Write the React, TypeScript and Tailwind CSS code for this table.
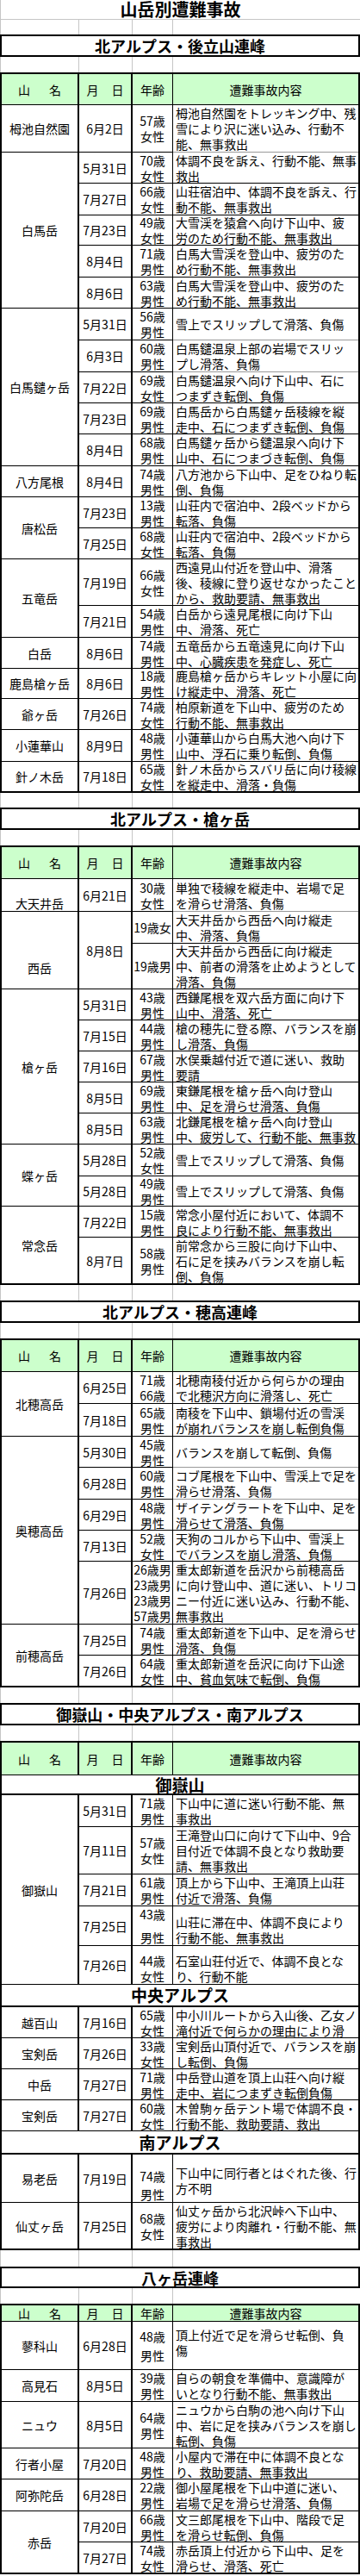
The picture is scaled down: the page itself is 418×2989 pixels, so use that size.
import React from "react";

type Item = { a: string[]; t: string[]; h: string; g?: boolean; ac?: string; tc?: string };
type Row = { d: string; items: Item[] };
type Group = { n: string; rows: Row[]; nc?: string };
type Sub = { sub: string; h: string };
type Part = Group | Sub;
type Section = { title: string; th: string; hh: string; gh: string; parts: Part[] };

const it = (a: string, t: string, h: string, x: Partial<Item> = {}): Item => ({
  a: a.split("/"),
  t: t.split("/"),
  h,
  ...x,
});
const r = (d: string, a: string, t: string, h: string, x: Partial<Item> = {}): Row => ({
  d,
  items: [it(a, t, h, x)],
});
const g = (n: string, rows: Row[], nc?: string): Group => ({ n, rows, nc });

const sections: Section[] = [
  {
    title: "北アルプス・後立山連峰",
    th: "h-[26px]",
    hh: "h-[36px]",
    gh: "h-[17px]",
    parts: [
      g("栂池自然園", [r("6月2日", "57歳/女性", "栂池自然園をトレッキング中、残/雪により沢に迷い込み、行動不/能、無事救出", "h-[55px]", { g: true })]),
      g("白馬岳", [
        r("5月31日", "70歳/女性", "体調不良を訴え、行動不能、無事/救出", "h-[36px]"),
        r("7月27日", "66歳/女性", "山荘宿泊中、体調不良を訴え、行/動不能、無事救出", "h-[37px]"),
        r("7月23日", "49歳/女性", "大雪渓を猿倉へ向け下山中、疲/労のため行動不能、無事救出", "h-[35px]"),
        r("8月4日", "71歳/男性", "白馬大雪渓を登山中、疲労のた/め行動不能、無事救出", "h-[37px]"),
        r("8月6日", "63歳/男性", "白馬大雪渓を登山中、疲労のた/め行動不能、無事救出", "h-[36px]"),
      ]),
      g("白馬鑓ヶ岳", [
        r("5月31日", "56歳/男性", "雪上でスリップして滑落、負傷", "h-[37px]", { g: true }),
        r("6月3日", "60歳/男性", "白馬鑓温泉上部の岩場でスリッ/プし滑落、負傷", "h-[37px]", { g: true }),
        r("7月22日", "69歳/女性", "白馬鑓温泉へ向け下山中、石に/つまずき転倒、負傷", "h-[36px]"),
        r("7月23日", "69歳/男性", "白馬岳から白馬鑓ヶ岳稜線を縦/走中、石につまずき転倒、負傷", "h-[36px]"),
        r("8月4日", "68歳/男性", "白馬鑓ヶ岳から鑓温泉へ向け下/山中、石につまづき転倒、負傷", "h-[37px]"),
      ]),
      g("八方尾根", [r("8月4日", "74歳/男性", "八方池から下山中、足をひねり転/倒、負傷", "h-[36px]")]),
      g("唐松岳", [
        r("7月23日", "13歳/男性", "山荘内で宿泊中、2段ベッドから/転落、負傷", "h-[36px]"),
        r("7月25日", "68歳/女性", "山荘内で宿泊中、2段ベッドから/転落、負傷", "h-[36px]"),
      ]),
      g("五竜岳", [
        r("7月19日", "66歳/女性", "西遠見山付近を登山中、滑落/後、稜線に登り返せなかったこと/から、救助要請、無事救出", "h-[54px]"),
        r("7月21日", "54歳/男性", "白岳から遠見尾根に向け下山/中、滑落、死亡", "h-[37px]"),
      ]),
      g("白岳", [r("8月6日", "74歳/男性", "五竜岳から五竜遠見に向け下山/中、心臓疾患を発症し、死亡", "h-[36px]")]),
      g("鹿島槍ヶ岳", [r("8月6日", "18歳/男性", "鹿島槍ヶ岳からキレット小屋に向/け縦走中、滑落、死亡", "h-[35px]")]),
      g("爺ヶ岳", [r("7月26日", "74歳/女性", "柏原新道を下山中、疲労のため/行動不能、無事救出", "h-[36px]")]),
      g("小蓮華山", [r("8月9日", "48歳/男性", "小蓮華山から白馬大池へ向け下/山中、浮石に乗り転倒、負傷", "h-[37px]")]),
      g("針ノ木岳", [r("7月18日", "65歳/女性", "針ノ木岳からスバリ岳に向け稜線/を縦走中、滑落・負傷", "h-[35px]")]),
    ],
  },
  {
    title: "北アルプス・槍ヶ岳",
    th: "h-[26px]",
    hh: "h-[37px]",
    gh: "h-[17px]",
    parts: [
      g("大天井岳", [r("6月21日", "30歳/女性", "単独で稜線を縦走中、岩場で足/を滑らせ滑落、負傷", "h-[38px]", { g: true })], "items-end"),
      g(
        "西岳",
        [
          {
            d: "8月8日",
            items: [
              it("19歳女", "大天井岳から西岳へ向け縦走/中、滑落、負傷", "h-[37px]"),
              it("19歳男", "大天井岳から西岳に向け縦走/中、前者の滑落を止めようとして/滑落、負傷", "h-[53px]"),
            ],
          },
        ],
        "items-center pt-[40px]"
      ),
      g("槍ヶ岳", [
        r("5月31日", "43歳/男性", "西鎌尾根を双六岳方面に向け下/山中、滑落、死亡", "h-[36px]"),
        r("7月15日", "44歳/男性", "槍の穂先に登る際、バランスを崩/し滑落、負傷", "h-[36px]"),
        r("7月16日", "67歳/男性", "水俣乗越付近で道に迷い、救助/要請", "h-[36px]"),
        r("8月5日", "69歳/男性", "東鎌尾根を槍ヶ岳へ向け登山/中、足を滑らせ滑落、負傷", "h-[36px]"),
        r("8月5日", "63歳/男性", "北鎌尾根を槍ヶ岳へ向け登山/中、疲労して、行動不能、無事救", "h-[36px]"),
      ]),
      g("蝶ヶ岳", [
        r("5月28日", "52歳/女性", "雪上でスリップして滑落、負傷", "h-[37px]"),
        r("5月28日", "49歳/男性", "雪上でスリップして滑落、負傷", "h-[35px]"),
      ]),
      g("常念岳", [
        r("7月22日", "15歳/男性", "常念小屋付近において、体調不/良により行動不能、無事救出", "h-[36px]"),
        r("8月7日", "58歳/男性", "前常念から三股に向け下山中、/石に足を挟みバランスを崩し転/倒、負傷", "h-[54px]"),
      ]),
    ],
  },
  {
    title: "北アルプス・穂高連峰",
    th: "h-[26px]",
    hh: "h-[37px]",
    gh: "h-[18px]",
    parts: [
      g("北穂高岳", [
        r("6月25日", "71歳/66歳", "北穂南稜付近から何らかの理由/で北穂沢方向に滑落し、死亡", "h-[37px]"),
        r("7月18日", "65歳/男性", "南稜を下山中、鎖場付近の雪渓/が崩れバランスを崩し転倒負傷", "h-[38px]"),
      ]),
      g("奥穂高岳", [
        r("5月30日", "45歳/男性", "バランスを崩して転倒、負傷", "h-[36px]", { g: true }),
        r("6月28日", "60歳/男性", "コブ尾根を下山中、雪渓上で足を/滑らせ滑落、負傷", "h-[37px]", { g: true }),
        r("6月29日", "48歳/男性", "ザイテングラートを下山中、足を/滑らせて滑落、負傷", "h-[36px]"),
        r("7月13日", "52歳/女性", "天狗のコルから下山中、雪渓上/でバランスを崩し滑落、負傷", "h-[36px]"),
        r(
          "7月26日",
          "26歳男/23歳男/23歳男/57歳男",
          "重太郎新道を岳沢から前穂高岳/に向け登山中、道に迷い、トリコ/ニー付近に迷い込み、行動不能、/無事救出",
          "h-[73px]"
        ),
      ]),
      g("前穂高岳", [
        r("7月25日", "74歳/男性", "重太郎新道を下山中、足を滑らせ/滑落、負傷", "h-[36px]"),
        r("7月26日", "64歳/女性", "重太郎新道を岳沢に向け下山途/中、貧血気味で転倒、負傷", "h-[36px]"),
      ]),
    ],
  },
  {
    title: "御嶽山・中央アルプス・南アルプス",
    th: "h-[26px]",
    hh: "h-[38px]",
    gh: "h-[18px]",
    parts: [
      { sub: "御嶽山", h: "h-[23px]" },
      g("御嶽山", [
        r("5月31日", "71歳/男性", "下山中に道に迷い行動不能、無/事救出", "h-[37px]"),
        r("7月11日", "57歳/女性", "王滝登山口に向けて下山中、9合/目付近で体調不良となり救助要/請、無事救出", "h-[55px]"),
        r("7月21日", "61歳/男性", "頂上から下山中、王滝頂上山荘/付近で滑落、負傷", "h-[37px]"),
        r("7月25日", "43歳/男性", "山荘に滞在中、体調不良により/行動不能、無事救出", "h-[46px]", {
          ac: "justify-between",
          tc: "justify-end",
        }),
        r("7月26日", "44歳/女性", "石室山荘付近で、体調不良とな/り、行動不能", "h-[45px]", {
          ac: "justify-end",
          tc: "justify-end",
        }),
      ]),
      { sub: "中央アルプス", h: "h-[26px]" },
      g("越百山", [r("7月16日", "65歳/女性", "中小川ルートから入山後、乙女ノ/滝付近で何らかの理由により滑", "h-[36px]")]),
      g("宝剣岳", [r("7月26日", "33歳/女性", "宝剣岳山頂付近で、バランスを崩/し転倒、負傷", "h-[36px]")]),
      g("中岳", [r("7月27日", "71歳/男性", "中岳登山道を頂上山荘へ向け縦/走中、岩につまずき転倒負傷", "h-[36px]")]),
      g("宝剣岳", [r("7月27日", "60歳/女性", "木曽駒ヶ岳テント場で体調不良・/行動不能、救助要請、救出", "h-[36px]")]),
      { sub: "南アルプス", h: "h-[27px]" },
      g("易老岳", [
        r("7月19日", "74歳/男性", "下山中に同行者とはぐれた後、行/方不明", "h-[56px]", {
          ac: "justify-end gap-[3px]",
          tc: "justify-start pt-[12px]",
        }),
      ]),
      g("仙丈ヶ岳", [r("7月25日", "68歳/女性", "仙丈ヶ岳から北沢峠へ下山中、/疲労により肉離れ・行動不能、無/事救出", "h-[54px]")]),
    ],
  },
  {
    title: "八ヶ岳連峰",
    th: "h-[25px]",
    hh: "h-[19px]",
    gh: "h-[19px]",
    parts: [
      g("蓼科山", [
        r("6月28日", "48歳/男性", "頂上付近で足を滑らせ転倒、負/傷", "h-[56px]", {
          ac: "justify-center gap-[4px]",
          tc: "justify-start pt-[6px]",
        }),
      ]),
      g("高見石", [r("8月5日", "39歳/男性", "自らの朝食を準備中、意識障が/いとなり行動不能、無事救出", "h-[37px]")]),
      g("ニュウ", [r("8月5日", "64歳/男性", "ニュウから白駒の池へ向け下山/中、岩に足を挟みバランスを崩し/転倒、負傷", "h-[54px]")]),
      g("行者小屋", [r("7月20日", "48歳/男性", "小屋内で滞在中に体調不良とな/り、救助要請、無事救出", "h-[36px]")]),
      g("阿弥陀岳", [r("6月28日", "22歳/男性", "御小屋尾根を下山中道に迷い、/岩場で足を滑らせ滑落、負傷", "h-[37px]")]),
      g("赤岳", [
        r("7月20日", "66歳/男性", "文三郎尾根を下山中、階段で足/を滑らせ転倒、負傷", "h-[36px]"),
        r("7月27日", "74歳/女性", "赤岳頂上付近から下山中、足を/滑らせ、滑落、死亡", "h-[36px]"),
      ]),
    ],
  },
];

// 罫線だけの空行（Excelのグリッド）
function GridRow({ h }: { h: string }) {
  return (
    <div className={`flex ${h} border-l border-[#c6c6c6]`}>
      <div className="w-[91px] border-r border-[#c6c6c6]" />
      <div className="w-[62px] border-r border-[#c6c6c6]" />
      <div className="w-[47px] border-r border-[#c6c6c6]" />
      <div className="flex-1" />
    </div>
  );
}

function Header({ h }: { h: string }) {
  return (
    <div className={`flex ${h} bg-[#ccffcc] border-b border-black`}>
      <div className="w-[90px] shrink-0 border-r-2 border-black flex items-center justify-center">
        <span>山</span>
        <span className="ml-[22px]">名</span>
      </div>
      <div className="w-[62px] shrink-0 border-r-2 border-black flex items-center justify-center">
        <span>月</span>
        <span className="ml-[15px]">日</span>
      </div>
      <div className="w-[47px] shrink-0 border-r border-black flex items-center justify-center">年齢</div>
      <div className="flex-1 flex items-center justify-center">遭難事故内容</div>
    </div>
  );
}

function ItemRow({ item }: { item: Item }) {
  return (
    <div className={`flex ${item.h}`}>
      <div
        className={`w-[47px] shrink-0 border-r border-b border-black flex flex-col items-center whitespace-nowrap ${
          item.ac ?? "justify-center"
        }`}
      >
        {item.a.map((l, i) => (
          <span key={i}>{l}</span>
        ))}
      </div>
      <div
        className={`flex-1 min-w-0 pl-[3px] border-b flex flex-col ${
          item.g ? "border-[#9a9a9a]" : "border-black"
        } ${item.tc ?? "justify-center"}`}
      >
        {item.t.map((l, i) => (
          <span key={i} className={`whitespace-nowrap ${l.length >= 16 ? "tracking-[-0.8px]" : ""}`}>
            {l}
          </span>
        ))}
      </div>
    </div>
  );
}

function Table({ s }: { s: Section }) {
  return (
    <div className="border-x-2 border-t-2 border-b border-black">
      <Header h={s.hh} />
      {s.parts.map((p, pi) =>
        "sub" in p ? (
          <div
            key={pi}
            className={`${p.h} border-b-2 border-black flex items-center justify-center text-[19px] font-bold`}
          >
            {p.sub}
          </div>
        ) : (
          <div key={pi} className="flex">
            <div
              className={`w-[90px] shrink-0 border-r-2 border-b border-black flex justify-center whitespace-nowrap ${
                p.nc ?? "items-center"
              }`}
            >
              {p.n}
            </div>
            <div className="flex-1 min-w-0 flex flex-col">
              {p.rows.map((row, ri) => (
                <div key={ri} className="flex">
                  <div className="w-[62px] shrink-0 border-r-2 border-b border-black flex items-center justify-center whitespace-nowrap">
                    {row.d}
                  </div>
                  <div className="flex-1 min-w-0 flex flex-col">
                    {row.items.map((item, ii) => (
                      <ItemRow key={ii} item={item} />
                    ))}
                  </div>
                </div>
              ))}
            </div>
          </div>
        )
      )}
    </div>
  );
}

export default function App() {
  return (
    <div className="w-[418px] bg-white text-black font-['Noto_Sans_CJK_JP',sans-serif] text-[14px] leading-[18px]">
      <div className="h-[23px] border-b border-l border-[#c6c6c6] flex items-center justify-center text-[20px] font-bold leading-none">
        山岳別遭難事故
      </div>
      {sections.map((s, si) => (
        <div key={si}>
          <GridRow h={s.gh} />
          <div className={`${s.th} border-2 border-black flex items-center justify-center text-[18px] font-bold leading-none`}>
            {s.title}
          </div>
          <GridRow h="h-[18px]" />
          <Table s={s} />
        </div>
      ))}
    </div>
  );
}
